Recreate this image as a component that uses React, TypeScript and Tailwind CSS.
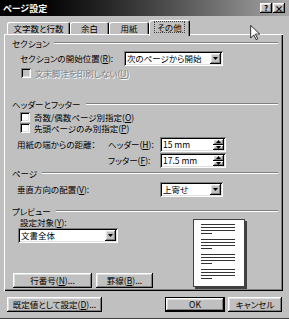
import React from "react";

const raised =
  "bg-[#c0c0c0] shadow-[inset_-1px_-1px_#000,inset_1px_1px_#fff,inset_-2px_-2px_#808080,inset_2px_2px_#dfdfdf]";
const sunken =
  "shadow-[inset_1px_1px_#808080,inset_-1px_-1px_#fff,inset_2px_2px_#000,inset_-2px_-2px_#dfdfdf]";

function Key({ k }: { k: string }) {
  return (
    <>
      (<span className="underline underline-offset-1">{k}</span>)
    </>
  );
}

function Heading({ text }: { text: string }) {
  return (
    <div className="flex items-center h-[10px] pl-[8px] pr-[5px]">
      <span>{text}</span>
      <div className="flex-1 ml-[5px] h-0 border-t border-t-[#808080] border-b border-b-white" />
    </div>
  );
}

function Arrow() {
  return (
    <div className={`${raised} w-[11px] h-[11px] flex items-center justify-center`}>
      <svg width="5" height="3" viewBox="0 0 5 3">
        <path d="M0 0h5L2.5 3z" fill="#000" />
      </svg>
    </div>
  );
}

function Dropdown({ text, className }: { text: string; className: string }) {
  return (
    <div className={`${sunken} bg-white h-[15px] flex items-center pl-[3px] pr-[2px] ${className}`}>
      <span className="flex-1 whitespace-nowrap leading-[11px]">{text}</span>
      <Arrow />
    </div>
  );
}

function Spinner({ text }: { text: string }) {
  return (
    <div className={`${sunken} bg-white h-[15px] w-[66px] flex items-center pl-[3px] pr-[2px]`}>
      <span className="flex-1 leading-[11px]">{text}</span>
      <div className="flex flex-col">
        {[0, 1].map((i) => (
          <div key={i} className={`${raised} w-[11px] h-[5.5px] flex items-center justify-center`}>
            <svg width="5" height="3" viewBox="0 0 5 3">
              <path d={i === 0 ? "M0 3h5L2.5 0z" : "M0 0h5L2.5 3z"} fill="#000" />
            </svg>
          </div>
        ))}
      </div>
    </div>
  );
}

function Check({ label, disabled }: { label: React.ReactNode; disabled?: boolean }) {
  return (
    <div className="flex items-center h-[10px] pl-[16px] gap-[4px]">
      <div className={`${sunken} w-[10px] h-[10px] ${disabled ? "bg-[#c0c0c0]" : "bg-white"}`} />
      <span className={disabled ? "text-[#808080] [text-shadow:1px_1px_#fff]" : ""}>{label}</span>
    </div>
  );
}

function Page() {
  return (
    <div className="mt-[3px] w-[52px] h-[68px] bg-white border border-[#404040] shadow-[2px_2px_0_#404040] pt-[4px] pl-[7px] flex flex-col gap-[5px]">
      {[0, 1, 2, 3].map((g) => (
        <div key={g} className="flex flex-col gap-[2px]">
          <div className="h-px w-[34px] bg-[#333]" />
          <div className="h-px w-[34px] bg-[#333]" />
          <div className="h-px w-[34px] bg-[#333]" />
          <div className="h-px w-[11px] bg-[#333]" />
        </div>
      ))}
    </div>
  );
}

export default function App() {
  const tabs = [
    { t: "文字数と行数", w: "w-[63px]" },
    { t: "余白", w: "w-[39px]" },
    { t: "用紙", w: "w-[40px]" },
  ];
  return (
    <div className="relative w-[289px] h-[319px] overflow-hidden bg-[#c0c0c0] border-b border-b-[#404040] flex flex-col font-['Noto_Sans_CJK_JP',sans-serif] text-[8.5px] leading-none text-black [font-feature-settings:'palt']">
      {/* title bar */}
      <div className="h-[16px] flex items-center bg-linear-to-r from-[#000] to-[#a8a8a8] pl-[3px] pr-[4px]">
        <span className="flex-1 text-white font-bold text-[9px]">ページ設定</span>
        <div className="flex gap-[1px]">
          <div className={`${raised} w-[12px] h-[10px] flex items-center justify-center text-[8px] font-bold`}>?</div>
          <div className={`${raised} w-[12px] h-[10px] flex items-center justify-center text-[9px] font-bold`}>×</div>
        </div>
      </div>

      {/* tabs */}
      <div className="mt-[4px] h-[14px] flex items-end pl-[7px]">
        {tabs.map((tab) => (
          <div
            key={tab.t}
            className={`${tab.w} h-[12px] flex items-center justify-center rounded-t-[2px] shadow-[inset_1px_1px_#fff,inset_-1px_0_#000,inset_-2px_0_#808080]`}
          >
            {tab.t}
          </div>
        ))}
        <div className="relative z-10 w-[41px] h-[16px] -mb-[2px] pb-[2px] flex items-center justify-center rounded-t-[2px] bg-[#c0c0c0] shadow-[inset_1px_1px_#fff,inset_-1px_0_#000,inset_-2px_0_#808080]">
          <span className="border border-dotted border-[#404040] px-[2px] py-[1px]">その他</span>
        </div>
      </div>

      {/* panel */}
      <div className="ml-[4px] w-[279px] h-[257px] flex flex-col shadow-[inset_1px_1px_#fff,inset_-1px_-1px_#000,inset_-2px_-2px_#808080]">
        <div className="mt-[4px]">
          <Heading text="セクション" />
        </div>
        <div className="mt-[3px] h-[15px] flex items-center">
          <span className="w-[120px] pl-[16px]">
            セクションの開始位置<Key k="R" />:
          </span>
          <Dropdown text="次のページから開始" className="w-[99px]" />
        </div>
        <div className="mt-[2px] pl-[1px]">
          <Check disabled label={<>文末脚注を印刷しない<Key k="U" /></>} />
        </div>

        <div className="mt-[21px]">
          <Heading text="ヘッダーとフッター" />
        </div>
        <div className="mt-[3px]">
          <Check label={<>奇数/偶数ページ別指定<Key k="O" /></>} />
        </div>
        <div className="mt-[1px]">
          <Check label={<>先頭ページのみ別指定<Key k="P" /></>} />
        </div>
        <div className="mt-[4px] h-[15px] flex items-center">
          <span className="w-[104px] pl-[13px]">用紙の端からの距離：</span>
          <span className="w-[52px]">
            ヘッダー<Key k="H" />:
          </span>
          <Spinner text="15 mm" />
        </div>
        <div className="mt-[1px] h-[15px] flex items-center">
          <span className="w-[104px]" />
          <span className="w-[52px]">
            フッター<Key k="F" />:
          </span>
          <Spinner text="17.5 mm" />
        </div>

        <Heading text="ページ" />
        <div className="mt-[4px] h-[15px] flex items-center">
          <span className="w-[156px] pl-[13px]">
            垂直方向の配置<Key k="V" />:
          </span>
          <Dropdown text="上寄せ" className="w-[63px]" />
        </div>

        <div className="mt-[9px]">
          <Heading text="プレビュー" />
        </div>
        <div className="flex">
          <div className="w-[189px] pl-[9px] flex flex-col">
            <span className="mt-[1px] h-[10px] ml-[7px] flex items-center">
              設定対象<Key k="Y" />:
            </span>
            <div className="mt-[1px] ml-[5px]">
              <Dropdown text="文書全体" className="w-[100px]" />
            </div>
            <div className="mt-[30px] flex gap-[4px]">
              <div className={`${raised} w-[79px] h-[15px] flex items-center justify-center`}>
                行番号<Key k="N" />...
              </div>
              <div className={`${raised} w-[57px] h-[15px] flex items-center justify-center`}>
                罫線<Key k="B" />...
              </div>
            </div>
          </div>
          <Page />
        </div>
      </div>

      {/* bottom buttons */}
      <div className="mt-[6px] h-[15px] flex">
        <div className={`${raised} ml-[7px] w-[95px] flex items-center justify-center`}>
          既定値として設定<Key k="D" />...
        </div>
        <div className="ml-[63px] w-[60px] border border-black">
          <div className={`${raised} h-full flex items-center justify-center`}>OK</div>
        </div>
        <div className={`${raised} ml-[3px] w-[54px] flex items-center justify-center`}>キャンセル</div>
      </div>

      {/* mouse pointer */}
      <svg className="absolute left-[250px] top-[25px]" width="10" height="15" viewBox="0 0 12 19">
        <path d="M0.5 0.5v16l4-4 3 6 2-1-3-6h5.5z" fill="#fff" stroke="#000" strokeWidth="1" />
      </svg>
    </div>
  );
}
